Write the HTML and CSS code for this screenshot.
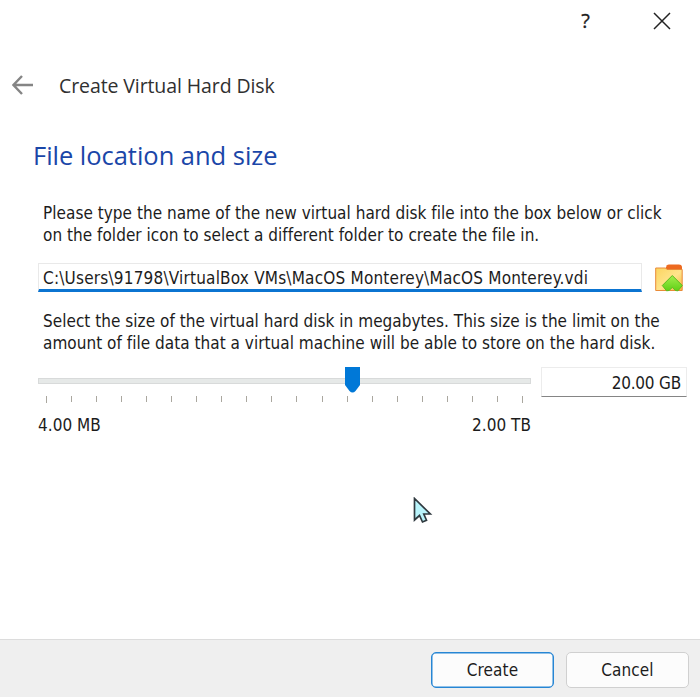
FILE: index.html
```html
<!DOCTYPE html>
<html lang="en">
<head>
<meta charset="utf-8">
<title>Create Virtual Hard Disk</title>
<link rel="stylesheet" href="styles.css">
</head>
<body>
<main class="dialog">
  <header class="titlebar">
    <span class="help">?</span>
    <svg class="close" width="18" height="18" viewBox="0 0 18 18"><path d="M1 1 17 17M17 1 1 17"/></svg>
  </header>
  <div class="wizard-head">
    <svg class="back" width="22" height="20" viewBox="0 0 22 20"><path d="M21 10H1.500M10 1 1.500 10 10 19"/></svg>
    <span class="wizard-title">Create Virtual Hard Disk</span>
  </div>
  <h1 class="heading">File location and size</h1>
  <p class="copy copy-location"><span class="line">Please type the name of the new virtual hard disk file into the box below or click</span><span class="line">on the folder icon to select a different folder to create the file in.</span></p>
  <div class="path-row">
    <div class="path-field"><span class="path-text">C:\Users\91798\VirtualBox VMs\MacOS Monterey\MacOS Monterey.vdi</span></div>
    <svg class="folder" width="28" height="28" viewBox="0 0 28 28">
      <defs>
        <linearGradient id="paper" x1="0" y1="0" x2="1" y2="1"><stop offset="0" stop-color="#fbd45f"/><stop offset=".55" stop-color="#ffe48c"/><stop offset="1" stop-color="#f8b63c"/></linearGradient>
        <linearGradient id="leaf" x1="0" y1="0" x2="0" y2="1"><stop offset="0" stop-color="#a4ee4c"/><stop offset="1" stop-color="#5fd016"/></linearGradient>
      </defs>
      <path d="M10 5 12 1.200Q12.500.5 14 .5H24Q26.500.5 27 2.500V7H10Z" fill="#ed6a20"/>
      <path d="M.7 4H10.500L12 5.500H27.200V26.500H.7Z" fill="url(#paper)" stroke="#e98b38"/>
      <path d="M17.300 11.500 27.300 21.500 23 26.800 20.500 26.500 17.300 23.500 14 26.500 11.500 26.800 7.300 21.500Z" fill="url(#leaf)" stroke="#5dbb20" stroke-linejoin="round"/>
    </svg>
  </div>
  <p class="copy copy-size"><span class="line">Select the size of the virtual hard disk in megabytes. This size is the limit on the</span><span class="line">amount of file data that a virtual machine will be able to store on the hard disk.</span></p>
  <div class="size-row">
    <div class="slider">
      <div class="track"><svg class="thumb" width="16" height="26" viewBox="0 0 16 26"><path d="M0 0H15V18L10.500 24Q7.500 27 4.500 24L0 18Z" fill="#0078d7"/></svg></div>
      <div class="ticks"><i class="end"></i><i></i><i></i><i></i><i></i><i></i><i></i><i></i><i></i><i></i><i></i><i></i><i></i><i></i><i></i><i></i><i></i><i></i><i></i><i class="end"></i></div>
      <div class="range"><span>4.00 MB</span><span>2.00 TB</span></div>
    </div>
    <div class="size-field"><span class="size-text">20.00 GB</span></div>
  </div>
  <svg class="cursor" width="20" height="28" viewBox="0 0 20 28"><path d="M1.500 1.500V23L6.500 18.500 9.500 25 13.500 23.200 10.800 17H17.300Z" fill="#b9f4fb" stroke="#303a40" stroke-width="1.700"/></svg>
  <footer class="actions">
    <button class="button primary">Create</button>
    <button class="button">Cancel</button>
  </footer>
</main>
</body>
</html>
```
FILE: styles.css
```css
* { box-sizing: border-box; }
body { margin: 0; background: #fff; }
.dialog {
  position: relative;
  width: 700px;
  height: 697px;
  display: flex;
  flex-direction: column;
  overflow: hidden;
  font: 17px/21.5px "DejaVu Sans Condensed", "DejaVu Sans", sans-serif;
  font-stretch: condensed;
  font-variant-ligatures: none;
  letter-spacing: .03px;
  color: #1c1c1c;
  white-space: nowrap;
}
.titlebar { height: 41px; display: flex; justify-content: flex-end; align-items: center; gap: 63px; padding-right: 29px; }
.help { font: 20px/24px "Open Sans", sans-serif; -webkit-text-stroke: .3px #1c1c1c; }
.close { fill: none; stroke: #222; stroke-width: 1.5; }
.wizard-head { height: 88px; display: flex; align-items: center; padding-left: 12px; gap: 25px; }
.back { fill: none; stroke: #858585; stroke-width: 2.4; }
.wizard-title { font: 19.5px/26px "Open Sans", sans-serif; letter-spacing: -.1px; padding-top: 2px; color: #303030; }
.heading { margin: 9px 0 0 33px; height: 34px; font: 25.5px/34px "Open Sans", sans-serif; letter-spacing: -.03px; color: #1a46a8; }
.copy { margin: 0 0 0 43px; }
.line { display: block; }
.copy-location { padding-top: 31px; height: 91px; }
.path-row { display: flex; height: 29px; padding-left: 38px; gap: 13px; }
.path-field { width: 604px; height: 29px; padding: 4px 4px; border: 1px solid #e9e9e9; border-bottom: 3px solid #0b74d1; }
.path-text { letter-spacing: .2px; }
.folder { margin-top: 1px; }
.copy-size { padding-top: 19px; height: 75px; }
.size-row { display: flex; padding-left: 38px; gap: 10px; }
.slider { width: 493px; padding-top: 11px; }
.track { position: relative; height: 6px; background: #e6e9e8; border: 1px solid #d8dada; }
.thumb { position: absolute; left: 306px; top: -12px; }
.ticks { display: flex; justify-content: space-between; height: 19px; padding: 12px 8px 0; }
.ticks i { width: 1px; height: 6px; background: #aaa79f; }
.ticks .end { height: 7px; }
.range { display: flex; justify-content: space-between; padding-top: 12px; }
.size-field { width: 146px; height: 30px; padding: 5px 5px 0; text-align: right; border: 1px solid #ececec; border-bottom: 1px solid #858585; }
.size-text { letter-spacing: -.2px; }
.cursor { position: absolute; left: 413px; top: 497px; }
.actions { margin-top: auto; height: 58px; display: flex; justify-content: flex-end; align-items: flex-start; gap: 12px; padding: 12px 11px 0 0; background: #efefef; border-top: 1px solid #dcdcdc; }
.button { width: 123px; height: 36px; padding: 2px 0 0; font: inherit; letter-spacing: .1px; color: inherit; background: #fcfcfc; border: 1px solid #d0d0d0; border-radius: 5px; }
.primary { border-color: #2786d4; box-shadow: inset 0 0 0 .5px #2786d4; }
```
